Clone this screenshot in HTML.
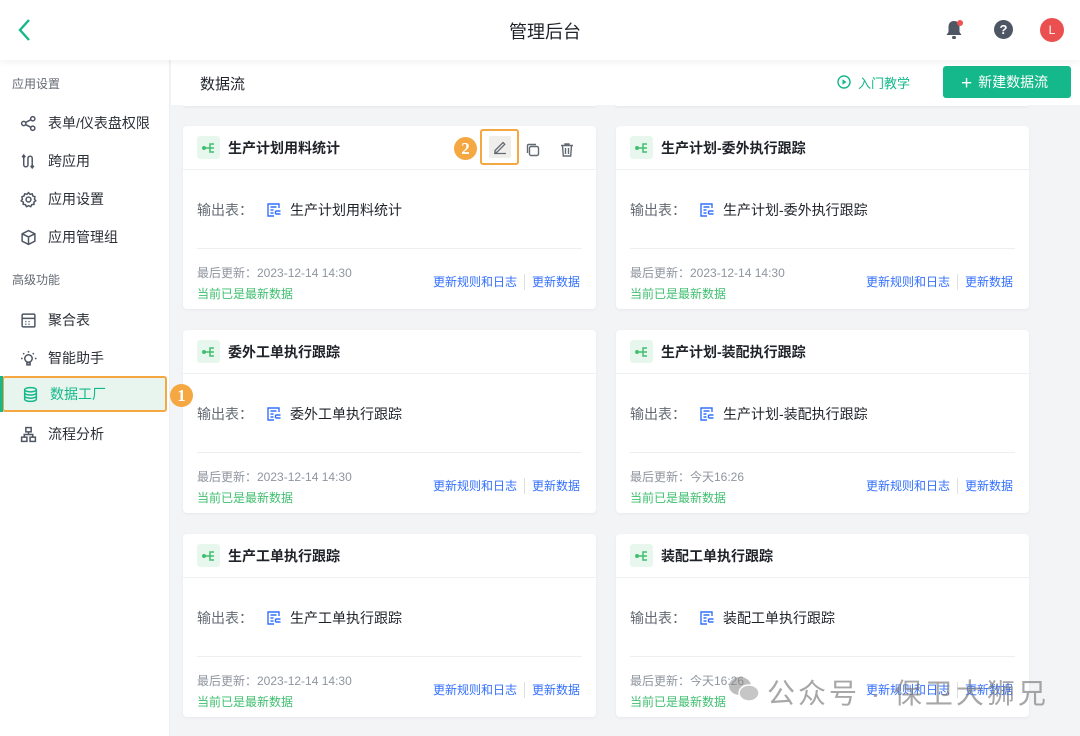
<!DOCTYPE html>
<html><head><meta charset="utf-8"><style>
*{box-sizing:border-box;margin:0;padding:0}
body{width:1080px;height:736px;overflow:hidden;background:#f3f4f6;font-family:"Liberation Sans","Noto Sans CJK SC",sans-serif;position:relative;color:#1f2329}
.hdr{position:absolute;left:0;top:0;width:1080px;height:60px;background:#fff;box-shadow:0 2px 6px rgba(0,0,0,.06);z-index:3}
.side{position:absolute;left:0;top:60px;width:170px;height:676px;background:#fff;border-right:1px solid #eceef1}
.sec{position:absolute;left:12px;font-size:12px;color:#646a73}
.it{position:absolute;left:0;width:170px;height:36px;display:flex;align-items:center;padding-left:20px;font-size:14px;color:#2b2f36}
.it svg{margin-right:11px;width:17px;height:17px}
.sub{position:absolute;left:171px;top:60px;width:909px;height:45px;background:#fff}
.card{position:absolute;width:413px;height:183px;background:#fff;border-radius:4px;box-shadow:0 1px 3px rgba(0,0,0,.05)}
.ct{position:absolute;left:0;top:0;width:100%;height:44px;border-bottom:1px solid #eef0f2;display:flex;align-items:center;padding-left:14px;font-size:14px;font-weight:bold;color:#1f2329}
.ic{width:23px;height:23px;background:#e8f7ee;border-radius:3px;margin-right:8px;display:flex;align-items:center;justify-content:center}
.out{position:absolute;left:14px;top:74px;font-size:14px;color:#646a73;display:flex;align-items:center}
.out svg{margin:0 8px 0 13px}
.out b{font-weight:normal;color:#1f2329}
.div{position:absolute;left:14px;right:14px;top:122px;border-top:1px solid #eceef1}
.f1{position:absolute;left:14px;top:138px;font-size:12px;color:#8f959e}
.f2{position:absolute;left:14px;top:159px;font-size:12px;color:#3fbf6f}
.lk{position:absolute;right:16px;top:147px;font-size:12px;color:#3370ff;display:flex;align-items:center}
.lk i{display:inline-block;width:1px;height:16px;background:#dee0e3;margin:0 7px}
</style></head><body>
<div class="hdr">
<svg style="position:absolute;left:16px;top:17px" width="18" height="26" viewBox="0 0 18 26"><path d="M13 3 L4 13 L13 23" stroke="#14b88a" stroke-width="2.4" fill="none"/></svg>
<div style="position:absolute;left:0;width:1090px;top:18px;text-align:center;font-size:18px;color:#1f2329">管理后台</div>
<svg style="position:absolute;left:945px;top:20px" width="18" height="20" viewBox="0 0 18 20"><path d="M9 1C5 1 3.5 4 3.5 7v5L1.5 15h15l-2-3V7C14.5 4 13 1 9 1z" fill="#4e5563"/><rect x="7" y="16" width="4" height="3" rx="1.5" fill="#4e5563"/><circle cx="15" cy="3" r="3" fill="#f05050"/></svg>
<div style="position:absolute;left:994px;top:20px;width:19px;height:19px;border-radius:50%;background:#4e5563;color:#fff;font-size:13px;font-weight:bold;text-align:center;line-height:19px">?</div>
<div style="position:absolute;left:1040px;top:18px;width:24px;height:24px;border-radius:50%;background:#ea5050;color:#fff;font-size:12px;text-align:center;line-height:24px">L</div>
</div>
<div class="side">
<div class="sec" style="top:15px">应用设置</div>
<div class="it" style="top:45px"><svg viewBox="0 0 16 16" fill="none" stroke="#4e5563" stroke-width="1.4"><circle cx="3.5" cy="8" r="2"/><circle cx="12" cy="3.5" r="2"/><circle cx="12" cy="12.5" r="2"/><path d="M5.3 7l4.9-2.6M5.3 9l4.9 2.6"/></svg>表单/仪表盘权限</div>
<div class="it" style="top:83px"><svg viewBox="0 0 16 16" fill="none" stroke="#4e5563" stroke-width="1.4"><path d="M2 4l1.5-2L5 4M3.5 2v9a2 2 0 004 0V5a2 2 0 014 0v9M10 12l1.5 2 1.5-2"/></svg>跨应用</div>
<div class="it" style="top:121px"><svg viewBox="0 0 16 16" fill="none" stroke="#4e5563" stroke-width="1.4"><circle cx="8" cy="8" r="2.3"/><path d="M8 1.5l1.4 1.6 2.1-.4.6 2 2 .8-.5 2.1 1.2 1.6-1.7 1.3.1 2.1-2.1.2-1 1.9-2-.9-2 .9-1-1.9-2.1-.2.1-2.1L1.1 9.2l1.2-1.6-.5-2.1 2-.8.6-2 2.1.4z"/></svg>应用设置</div>
<div class="it" style="top:159px"><svg viewBox="0 0 16 16" fill="none" stroke="#4e5563" stroke-width="1.4"><path d="M8 1.5l6 3v7l-6 3-6-3v-7zM2 4.5l6 3 6-3M8 7.5v7"/></svg>应用管理组</div>
<div class="sec" style="top:211px">高级功能</div>
<div class="it" style="top:242px"><svg viewBox="0 0 16 16" fill="none" stroke="#4e5563" stroke-width="1.4"><rect x="2" y="2" width="12" height="12" rx="1"/><path d="M2 6h12M5 9h1M8 9h1M11 9h0M5 11.5h1M8 11.5h1"/></svg>聚合表</div>
<div class="it" style="top:280px"><svg viewBox="0 0 16 16" fill="none" stroke="#4e5563" stroke-width="1.4"><circle cx="8" cy="8" r="3.5"/><path d="M6.5 12h3v2h-3zM8 1v1.5M1 8h1.5M14 8h1.5M3 3l1 1M13 3l-1 1"/></svg>智能助手</div>
<div class="it" style="top:316px;left:2px;width:165px;height:36px;background:#e8f5ee;border:2px solid #f5a742;border-radius:3px;color:#14b88a;padding-left:18px"><svg viewBox="0 0 16 16" fill="none" stroke="#14b88a" stroke-width="1.4"><ellipse cx="8" cy="3.5" rx="5.5" ry="2"/><path d="M2.5 3.5v9c0 1.1 2.5 2 5.5 2s5.5-.9 5.5-2v-9M2.5 6.5c0 1.1 2.5 2 5.5 2s5.5-.9 5.5-2M2.5 9.5c0 1.1 2.5 2 5.5 2s5.5-.9 5.5-2"/></svg>数据工厂</div>
<div style="position:absolute;left:0;top:316px;width:3px;height:36px;background:#14b88a"></div>
<div style="position:absolute;left:170px;top:324px;width:23px;height:23px;border-radius:50%;background:#f5a742;color:#fff;font-size:17px;font-weight:bold;text-align:center;line-height:23px;font-family:'Liberation Serif',serif;z-index:2">1</div>
<div class="it" style="top:356px"><svg viewBox="0 0 16 16" fill="none" stroke="#4e5563" stroke-width="1.4"><rect x="5.5" y="1.5" width="5" height="4"/><rect x="1.5" y="10.5" width="5" height="4"/><rect x="9.5" y="10.5" width="5" height="4"/><path d="M8 5.5v2.5M4 10.5V8h8v2.5"/></svg>流程分析</div>
</div>
<div style="position:absolute;left:183px;top:95px;width:413px;height:11px;background:#fff;box-shadow:0 1px 3px rgba(0,0,0,.06)"></div>
<div style="position:absolute;left:616px;top:95px;width:413px;height:11px;background:#fff;box-shadow:0 1px 3px rgba(0,0,0,.06)"></div>
<div class="sub">
<div style="position:absolute;left:29px;top:13px;font-size:15px;color:#1f2329">数据流</div>
<svg style="position:absolute;left:666px;top:15px" width="14" height="14" viewBox="0 0 14 14"><circle cx="7" cy="7" r="6" fill="none" stroke="#14b88a" stroke-width="1.4"/><path d="M5.5 4.3v5.4L9.6 7z" fill="#14b88a"/></svg>
<div style="position:absolute;left:687px;top:13px;font-size:13px;color:#14b88a">入门教学</div>
<div style="position:absolute;left:772px;top:6px;width:128px;height:32px;background:#14b88a;border-radius:3px;color:#fff;font-size:14px;line-height:32px;padding-left:18px"><span style="font-size:19px;vertical-align:-2px;margin-right:6px">+</span>新建数据流</div>
</div>

<div class="card" style="left:183px;top:126px">
<div class="ct"><div class="ic"><svg width="14" height="12" viewBox="0 0 14 12" fill="none" stroke="#3fbf6f" stroke-width="1.5"><circle cx="2" cy="6" r="1.2" fill="#3fbf6f"/><path d="M3 6h4M12 2H8v8h4M7 6h5"/></svg></div>生产计划用料统计</div>
<div style="position:absolute;left:271px;top:11px;width:23px;height:23px;border-radius:50%;background:#f5a742;color:#fff;font-size:17px;font-weight:bold;text-align:center;line-height:23px;font-family:'Liberation Serif',serif">2</div>
<div style="position:absolute;left:297px;top:3px;width:39px;height:36px;border:2px solid #f5a742;border-radius:3px;"><div style="position:absolute;left:7px;top:5px;width:22px;height:22px;background:#efeeeb;border-radius:2px"></div><svg style="position:absolute;left:10px;top:8px" width="16" height="16" viewBox="0 0 16 16" fill="none" stroke="#646a73" stroke-width="1.3"><path d="M3 11.5L11 3.5l1.8 1.8-8 8H3zM2 14.5h12"/></svg></div>
<svg style="position:absolute;left:342px;top:16px" width="16" height="16" viewBox="0 0 16 16" fill="none" stroke="#646a73" stroke-width="1.4"><rect x="4.5" y="4.5" width="9" height="9" rx="1.5"/><path d="M2.5 11V3.5a1 1 0 011-1H11"/></svg>
<svg style="position:absolute;left:376px;top:16px" width="16" height="16" viewBox="0 0 16 16" fill="none" stroke="#646a73" stroke-width="1.4"><path d="M2 3.5h12M6 3.5V2h4v1.5M3.5 3.5l.8 10.5h7.4l.8-10.5M6.5 6v6M9.5 6v6"/></svg>
<div class="out">输出表：<svg width="16" height="16" viewBox="0 0 16 16" fill="none" stroke="#3370ff" stroke-width="1.4"><path d="M13 6V2H2v12h6M4.5 5h6M4.5 8h3M4.5 11h3M9.5 9h5M9.5 12h5M9.5 9v3"/></svg><b>生产计划用料统计</b></div>
<div class="div"></div><div class="f1">最后更新：2023-12-14 14:30</div><div class="f2">当前已是最新数据</div><div class="lk">更新规则和日志<i></i>更新数据</div></div>

<div class="card" style="left:616px;top:126px">
<div class="ct"><div class="ic"><svg width="14" height="12" viewBox="0 0 14 12" fill="none" stroke="#3fbf6f" stroke-width="1.5"><circle cx="2" cy="6" r="1.2" fill="#3fbf6f"/><path d="M3 6h4M12 2H8v8h4M7 6h5"/></svg></div>生产计划-委外执行跟踪</div>
<div class="out">输出表：<svg width="16" height="16" viewBox="0 0 16 16" fill="none" stroke="#3370ff" stroke-width="1.4"><path d="M13 6V2H2v12h6M4.5 5h6M4.5 8h3M4.5 11h3M9.5 9h5M9.5 12h5M9.5 9v3"/></svg><b>生产计划-委外执行跟踪</b></div>
<div class="div"></div><div class="f1">最后更新：2023-12-14 14:30</div><div class="f2">当前已是最新数据</div><div class="lk">更新规则和日志<i></i>更新数据</div></div>

<div class="card" style="left:183px;top:330px">
<div class="ct"><div class="ic"><svg width="14" height="12" viewBox="0 0 14 12" fill="none" stroke="#3fbf6f" stroke-width="1.5"><circle cx="2" cy="6" r="1.2" fill="#3fbf6f"/><path d="M3 6h4M12 2H8v8h4M7 6h5"/></svg></div>委外工单执行跟踪</div>
<div class="out">输出表：<svg width="16" height="16" viewBox="0 0 16 16" fill="none" stroke="#3370ff" stroke-width="1.4"><path d="M13 6V2H2v12h6M4.5 5h6M4.5 8h3M4.5 11h3M9.5 9h5M9.5 12h5M9.5 9v3"/></svg><b>委外工单执行跟踪</b></div>
<div class="div"></div><div class="f1">最后更新：2023-12-14 14:30</div><div class="f2">当前已是最新数据</div><div class="lk">更新规则和日志<i></i>更新数据</div></div>

<div class="card" style="left:616px;top:330px">
<div class="ct"><div class="ic"><svg width="14" height="12" viewBox="0 0 14 12" fill="none" stroke="#3fbf6f" stroke-width="1.5"><circle cx="2" cy="6" r="1.2" fill="#3fbf6f"/><path d="M3 6h4M12 2H8v8h4M7 6h5"/></svg></div>生产计划-装配执行跟踪</div>
<div class="out">输出表：<svg width="16" height="16" viewBox="0 0 16 16" fill="none" stroke="#3370ff" stroke-width="1.4"><path d="M13 6V2H2v12h6M4.5 5h6M4.5 8h3M4.5 11h3M9.5 9h5M9.5 12h5M9.5 9v3"/></svg><b>生产计划-装配执行跟踪</b></div>
<div class="div"></div><div class="f1">最后更新：今天16:26</div><div class="f2">当前已是最新数据</div><div class="lk">更新规则和日志<i></i>更新数据</div></div>

<div class="card" style="left:183px;top:534px">
<div class="ct"><div class="ic"><svg width="14" height="12" viewBox="0 0 14 12" fill="none" stroke="#3fbf6f" stroke-width="1.5"><circle cx="2" cy="6" r="1.2" fill="#3fbf6f"/><path d="M3 6h4M12 2H8v8h4M7 6h5"/></svg></div>生产工单执行跟踪</div>
<div class="out">输出表：<svg width="16" height="16" viewBox="0 0 16 16" fill="none" stroke="#3370ff" stroke-width="1.4"><path d="M13 6V2H2v12h6M4.5 5h6M4.5 8h3M4.5 11h3M9.5 9h5M9.5 12h5M9.5 9v3"/></svg><b>生产工单执行跟踪</b></div>
<div class="div"></div><div class="f1">最后更新：2023-12-14 14:30</div><div class="f2">当前已是最新数据</div><div class="lk">更新规则和日志<i></i>更新数据</div></div>

<div class="card" style="left:616px;top:534px">
<div class="ct"><div class="ic"><svg width="14" height="12" viewBox="0 0 14 12" fill="none" stroke="#3fbf6f" stroke-width="1.5"><circle cx="2" cy="6" r="1.2" fill="#3fbf6f"/><path d="M3 6h4M12 2H8v8h4M7 6h5"/></svg></div>装配工单执行跟踪</div>
<div class="out">输出表：<svg width="16" height="16" viewBox="0 0 16 16" fill="none" stroke="#3370ff" stroke-width="1.4"><path d="M13 6V2H2v12h6M4.5 5h6M4.5 8h3M4.5 11h3M9.5 9h5M9.5 12h5M9.5 9v3"/></svg><b>装配工单执行跟踪</b></div>
<div class="div"></div><div class="f1">最后更新：今天16:26</div><div class="f2">当前已是最新数据</div><div class="lk">更新规则和日志<i></i>更新数据</div></div>

<svg style="position:absolute;left:728px;top:675px;opacity:.55" width="32" height="30" viewBox="0 0 32 30"><ellipse cx="12" cy="11" rx="11" ry="9" fill="#888"/><ellipse cx="21" cy="18" rx="10" ry="8" fill="#999" stroke="#fff" stroke-width="1.5"/></svg>
<div style="position:absolute;left:767px;top:672px;font-size:28px;color:rgba(120,120,120,.65);letter-spacing:3px;white-space:nowrap">公众号 · 保卫大狮兄</div>
</body></html>
